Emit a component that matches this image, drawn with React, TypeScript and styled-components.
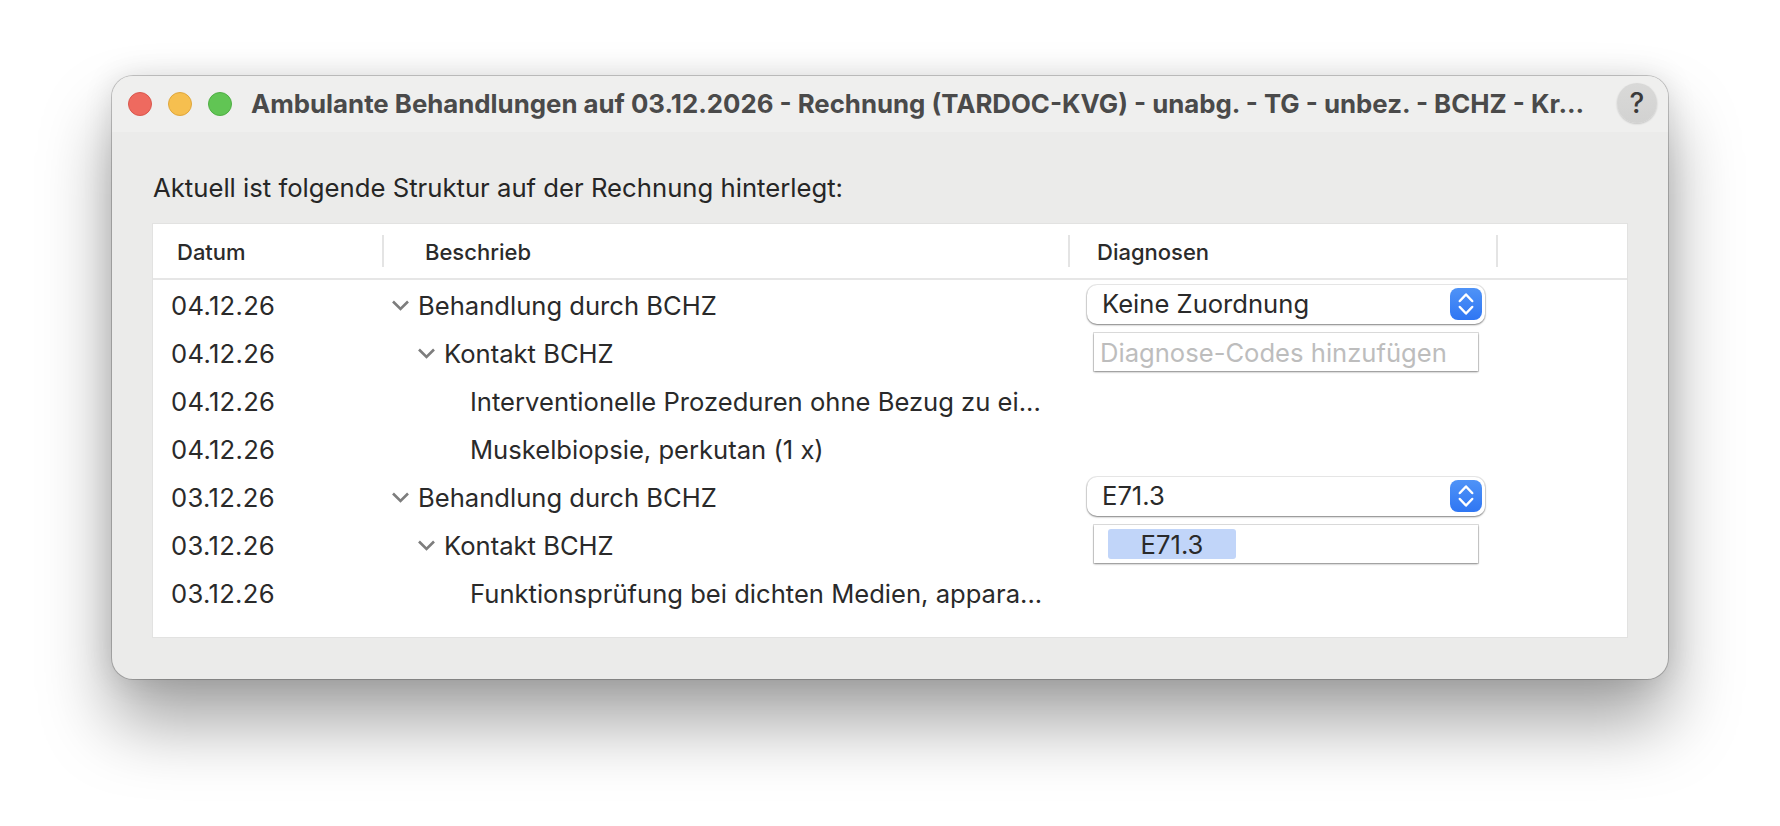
import React from 'react';
import styled, { createGlobalStyle } from 'styled-components';

const GlobalStyle = createGlobalStyle`
  html, body {
    margin: 0;
    padding: 0;
    background: #ffffff;
    font-family: Inter, "Liberation Sans", sans-serif;
  }
`;

const Page = styled.div`
  width: 1780px;
  height: 826px;
  padding: 76px 0 0 112px;
  box-sizing: border-box;
  overflow: hidden;
`;

const Window = styled.div`
  width: 1556px;
  height: 603px;
  box-sizing: border-box;
  background: #ebebea;
  border-radius: 21px;
  box-shadow: 0 0 0 1px rgba(0, 0, 0, 0.2), 0 44px 70px rgba(0, 0, 0, 0.36), 0 0 30px rgba(0, 0, 0, 0.12);
  display: flex;
  flex-direction: column;
  overflow: hidden;
`;

const TitleBar = styled.div`
  height: 56px;
  flex: none;
  background: #efefee;
  display: flex;
  align-items: center;
  padding: 0 11px 0 16px;
  gap: 16px;
`;

const Light = styled.span<{ $color: string; $edge: string }>`
  width: 24px;
  height: 24px;
  border-radius: 50%;
  box-sizing: border-box;
  background: ${(p) => p.$color};
  border: 1px solid ${(p) => p.$edge};
  flex: none;
`;

const Title = styled.div`
  flex: 1;
  min-width: 0;
  margin-left: 3px;
  padding-bottom: 2px;
  font-size: 25.8px;
  font-weight: 700;
  color: #4a4a4a;
  white-space: nowrap;
  overflow: hidden;
  text-overflow: ellipsis;
`;

const HelpButton = styled.div`
  width: 40px;
  height: 40px;
  margin-bottom: 2px;
  border-radius: 50%;
  background: linear-gradient(#d9d9d8, #d2d2d1);
  box-shadow: 0 1px 2px rgba(0, 0, 0, 0.18);
  color: #3a3a3a;
  font-size: 28px;
  font-weight: 500;
  display: flex;
  align-items: center;
  justify-content: center;
  flex: none;
`;

const Content = styled.div`
  flex: 1;
  padding: 40px 41px 0;
  display: flex;
  flex-direction: column;
`;

const Caption = styled.div`
  font-size: 25.7px;
  line-height: 32px;
  height: 52px;
  color: #262626;
  white-space: nowrap;
`;

const Table = styled.div`
  height: 413px;
  background: #ffffff;
  box-shadow: 0 0 0 1px #e2e2e1;
`;

const HeaderRow = styled.div`
  height: 56px;
  box-sizing: border-box;
  border-bottom: 2px solid #e6e6e6;
  display: grid;
  grid-template-columns: 231px 686px 428px 1fr;
  align-items: center;
`;

const HeaderCell = styled.div<{ $pad: number; $sep?: boolean }>`
  height: 32px;
  line-height: 34px;
  box-sizing: border-box;
  padding-left: ${(p) => p.$pad}px;
  font-size: 22px;
  font-weight: 500;
  color: #2b2b2b;
  border-right: ${(p) => (p.$sep ? '2px solid #e4e4e4' : 'none')};
`;

const Rows = styled.div`
  padding-top: 1px;
`;

const Row = styled.div`
  height: 48px;
  display: grid;
  grid-template-columns: 231px 686px 428px 1fr;
  align-items: center;
  font-size: 25.6px;
  color: #2a2a2a;
`;

const DateCell = styled.div`
  padding-left: 18px;
  letter-spacing: 0.3px;
`;

const TreeCell = styled.div<{ $level: number }>`
  display: flex;
  align-items: center;
  gap: 10px;
  padding-left: ${(p) => 8 + p.$level * 26}px;
  white-space: nowrap;
`;

const Spacer = styled.span`
  width: 16px;
  flex: none;
`;

const DiagnosisCell = styled.div`
  position: relative;
`;

const Select = styled.div`
  width: 398px;
  height: 39px;
  margin: 0 0 2px 17px;
  box-sizing: border-box;
  background: #ffffff;
  border-radius: 10px;
  box-shadow: 0 0 0 1px rgba(0, 0, 0, 0.08), 0 1px 2px rgba(0, 0, 0, 0.45);
  display: flex;
  align-items: center;
  justify-content: space-between;
  padding: 0 3px 0 15px;
`;

const SelectLabel = styled.span`
  padding-bottom: 2px;
`;

const Stepper = styled.span`
  width: 32px;
  height: 32px;
  border-radius: 8px;
  background: linear-gradient(#4f93f7, #2f76f3);
  display: flex;
  align-items: center;
  justify-content: center;
`;

const CodeInput = styled.div`
  width: 384px;
  height: 38px;
  margin: 0 0 2px 24px;
  box-sizing: border-box;
  background: #ffffff;
  box-shadow: 0 0 0 1px rgba(0, 0, 0, 0.12), 0 1px 2px rgba(0, 0, 0, 0.4);
  display: flex;
  align-items: center;
  padding: 0 6px;
`;

const Placeholder = styled.span`
  color: #bdbdbd;
  white-space: nowrap;
`;

const Token = styled.span`
  width: 128px;
  height: 30px;
  margin-left: 8px;
  border-radius: 3px;
  background: #c1d5f9;
  display: flex;
  align-items: center;
  justify-content: center;
`;

const Chevron = () => (
  <svg width="17" height="11" viewBox="0 0 17 11" fill="none" style={{ flex: 'none', marginRight: -1 }}>
    <path d="M1 1.5 L8.5 9 L16 1.5" stroke="#7d7d7d" strokeWidth="2.6" />
  </svg>
);

const StepperIcon = () => (
  <svg width="16" height="26" viewBox="0 0 16 26" fill="none">
    <path d="M1.8 10 L8 3.5 L14.2 10 M1.8 16 L8 22.5 L14.2 16" stroke="#ffffff" strokeWidth="2.5" strokeLinecap="round" strokeLinejoin="round" />
  </svg>
);

type RowData = {
  date: string;
  label: string;
  level: number;
  expandable?: boolean;
  diagnosis?: React.ReactNode;
};

const rows: RowData[] = [
  {
    date: '04.12.26',
    label: 'Behandlung durch BCHZ',
    level: 0,
    expandable: true,
    diagnosis: (
      <Select>
        <SelectLabel>Keine Zuordnung</SelectLabel>
        <Stepper><StepperIcon /></Stepper>
      </Select>
    ),
  },
  {
    date: '04.12.26',
    label: 'Kontakt BCHZ',
    level: 1,
    expandable: true,
    diagnosis: (
      <CodeInput>
        <Placeholder>Diagnose-Codes hinzufügen</Placeholder>
      </CodeInput>
    ),
  },
  { date: '04.12.26', label: 'Interventionelle Prozeduren ohne Bezug zu ei...', level: 2 },
  { date: '04.12.26', label: 'Muskelbiopsie, perkutan (1 x)', level: 2 },
  {
    date: '03.12.26',
    label: 'Behandlung durch BCHZ',
    level: 0,
    expandable: true,
    diagnosis: (
      <Select>
        <SelectLabel>E71.3</SelectLabel>
        <Stepper><StepperIcon /></Stepper>
      </Select>
    ),
  },
  {
    date: '03.12.26',
    label: 'Kontakt BCHZ',
    level: 1,
    expandable: true,
    diagnosis: (
      <CodeInput>
        <Token>E71.3</Token>
      </CodeInput>
    ),
  },
  { date: '03.12.26', label: 'Funktionsprüfung bei dichten Medien, appara...', level: 2 },
];

export default function App() {
  return (
    <Page>
      <GlobalStyle />
      <Window>
        <TitleBar>
          <Light $color="#ee6a5f" $edge="#d9574d" />
          <Light $color="#f6bf4f" $edge="#dfa63c" />
          <Light $color="#61c554" $edge="#4fae44" />
          <Title>Ambulante Behandlungen auf 03.12.2026 - Rechnung (TARDOC-KVG) - unabg. - TG - unbez. - BCHZ - Kr...</Title>
          <HelpButton>?</HelpButton>
        </TitleBar>
        <Content>
          <Caption>Aktuell ist folgende Struktur auf der Rechnung hinterlegt:</Caption>
          <Table>
            <HeaderRow>
              <HeaderCell $pad={24} $sep>Datum</HeaderCell>
              <HeaderCell $pad={41} $sep>Beschrieb</HeaderCell>
              <HeaderCell $pad={27} $sep>Diagnosen</HeaderCell>
              <HeaderCell $pad={0} />
            </HeaderRow>
            <Rows>
              {rows.map((row, i) => (
                <Row key={i}>
                  <DateCell>{row.date}</DateCell>
                  <TreeCell $level={row.level}>
                    {row.expandable ? <Chevron /> : <Spacer />}
                    {row.label}
                  </TreeCell>
                  <DiagnosisCell>{row.diagnosis}</DiagnosisCell>
                </Row>
              ))}
            </Rows>
          </Table>
        </Content>
      </Window>
    </Page>
  );
}
